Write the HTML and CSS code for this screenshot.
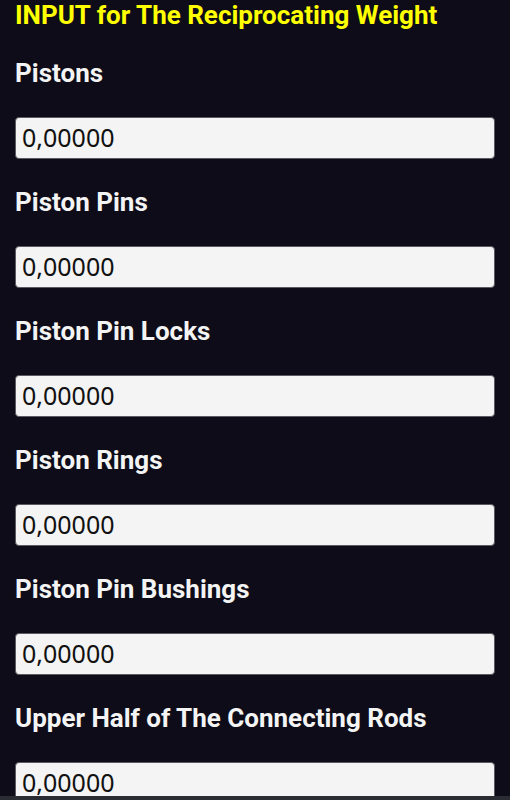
FILE: index.html
```html
<!DOCTYPE html>
<html lang="en">
<head>
    <meta charset="UTF-8">
    <meta name="viewport" content="width=device-width, initial-scale=1.0">
    <title>Reciprocating Weight</title>
    <link rel="stylesheet" href="styles.css">
</head>
<body>
    <h1 class="title">INPUT for The Reciprocating Weight</h1>
    <div class="field">
        <label for="pistons">Pistons</label>
        <input type="text" id="pistons" value="0,00000">
    </div>
    <div class="field">
        <label for="pistonPins">Piston Pins</label>
        <input type="text" id="pistonPins" value="0,00000">
    </div>
    <div class="field">
        <label for="pinLocks">Piston Pin Locks</label>
        <input type="text" id="pinLocks" value="0,00000">
    </div>
    <div class="field">
        <label for="rings">Piston Rings</label>
        <input type="text" id="rings" value="0,00000">
    </div>
    <div class="field">
        <label for="bushings">Piston Pin Bushings</label>
        <input type="text" id="bushings" value="0,00000">
    </div>
    <div class="field">
        <label for="upperRods">Upper Half of The Connecting Rods</label>
        <input type="text" id="upperRods" value="0,00000">
    </div>
    <div class="bottom-bar"></div>
</body>
</html>
```

FILE: styles.css
```css
html, body {
    background: #0d0c18;
}
body {
    margin: 0;
    padding: 0 15px;
    font-family: Roboto, "Liberation Sans", sans-serif;
    overflow: hidden;
    height: 800px;
}
.title {
    margin: 0;
    font-size: 26px;
    line-height: 30px;
    font-weight: bold;
    color: #ffff00;
}
.field {
    display: flex;
    flex-direction: column;
    margin-top: 28px;
}
.field label {
    font-size: 26px;
    line-height: 30px;
    font-weight: bold;
    color: #f4f4f4;
    margin-bottom: 29px;
}
.field input {
    box-sizing: border-box;
    height: 42px;
    width: 480px;
    margin: 0;
    padding: 0 6px 2px;
    border: 1px solid #5a5a60;
    border-radius: 4px;
    background: #f4f4f4;
    color: #111;
    font-family: "Noto Sans", "Open Sans", sans-serif;
    font-size: 25px;
}
.bottom-bar {
    position: fixed;
    left: 0;
    right: 0;
    bottom: 0;
    height: 4px;
    background: #2b2b33;
}
```
